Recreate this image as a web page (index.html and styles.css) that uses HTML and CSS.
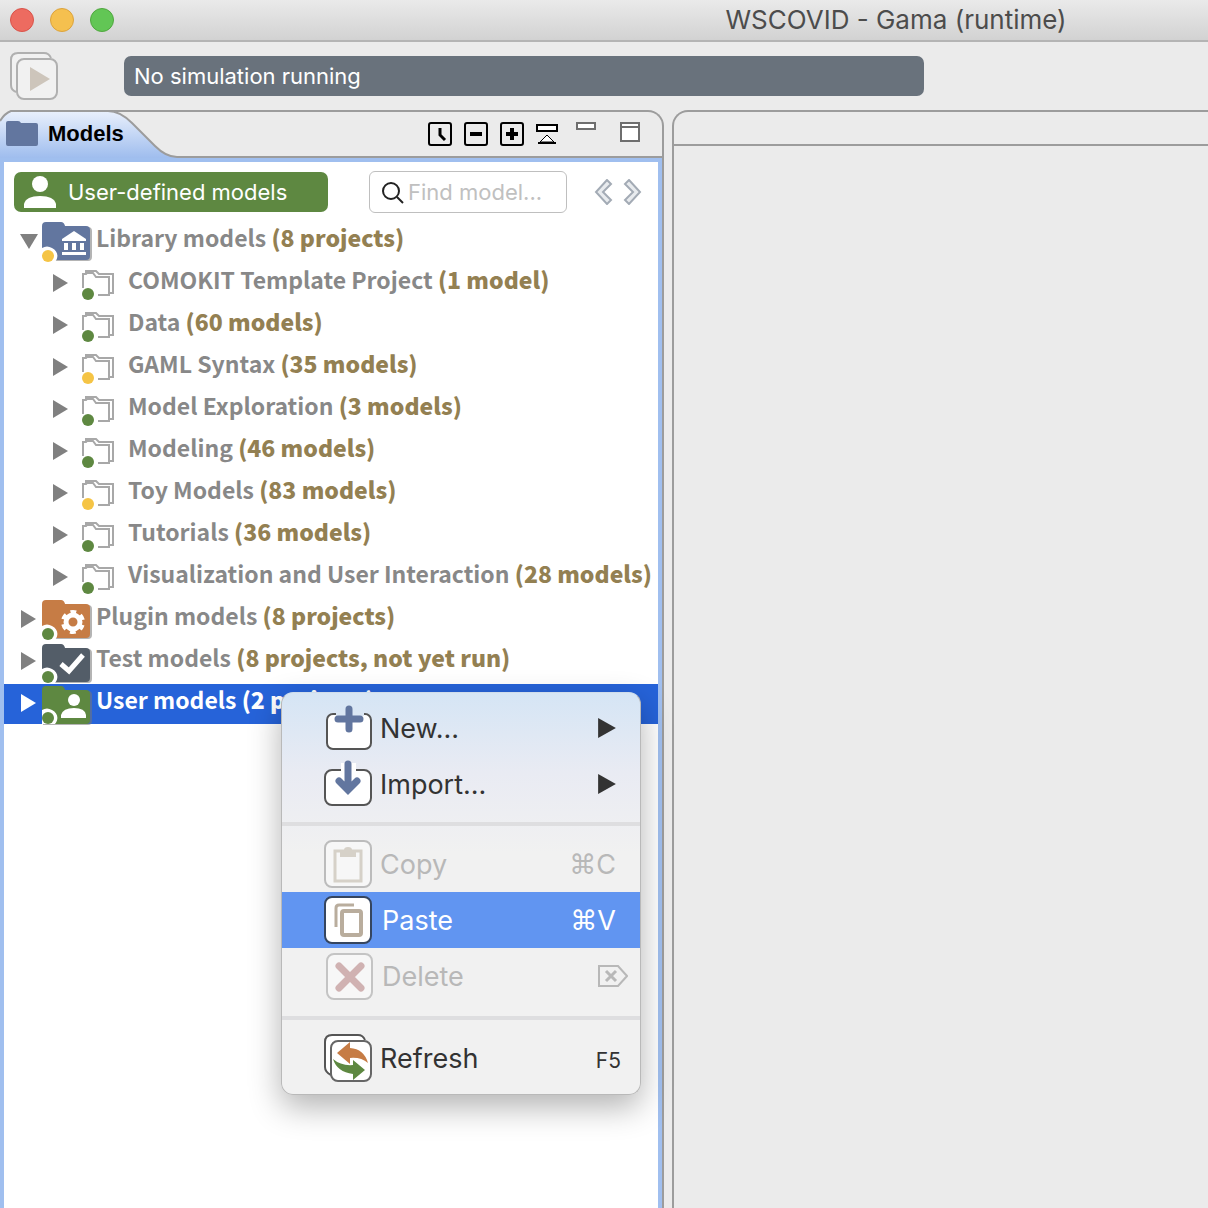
FILE: index.html
```html
<!DOCTYPE html>
<html lang="en">
<head>
<meta charset="utf-8">
<title>WSCOVID - Gama (runtime)</title>
<link rel="stylesheet" href="styles.css">
</head>
<body>
<svg class="sprite" aria-hidden="true">
  <symbol id="right" viewBox="0 0 16 18"><path d="M1 0v18l15-9z" fill="currentColor"/></symbol>
  <symbol id="down" viewBox="0 0 18 16"><path d="M0 1h18L9 16z" fill="currentColor"/></symbol>
  <symbol id="folders" viewBox="0 0 34 32">
    <path d="M1 18V4h3l1-1h6l3 4h13v18H16M4 4V1h10l3 3h14v19h-3" fill="none" stroke="#a8a8a8" stroke-width="2"/>
    <circle cx="6" cy="24" r="6" fill="currentColor"/>
  </symbol>
  <symbol id="folder" viewBox="0 0 50 40">
    <path d="M1 4q0-3 3-3h15q3 0 4 4h23q4 0 4 4v26q0 4-4 4H1z" fill="#777" opacity=".55"/>
    <path d="M0 4q0-4 4-4h15q3 0 4 4h21q4 0 4 4v26q0 4-4 4H0z" fill="currentColor"/>
  </symbol>
  <symbol id="badge" viewBox="0 0 16 16">
    <path d="M0 2q5-3 10 0c6 3 7 9 3 14H0z" fill="#fff"/>
  </symbol>
</svg>

<div class="window">
  <header class="titlebar">
    <div class="lights"><button class="light red" aria-label="Close"></button><button class="light amber" aria-label="Minimize"></button><button class="light green" aria-label="Zoom"></button></div>
    <h1 class="title">WSCOVID - Gama (runtime)</h1>
  </header>

  <div class="runbar">
    <button class="run" aria-label="Run">
      <svg width="50" height="50" viewBox="0 0 50 50"><g fill="#f1f1f1" stroke="#b0b0b0" stroke-width="2"><path d="M7 41Q2 39 2 34V9q0-7 7-7h26q5 0 7 5"/><rect x="8" y="8" width="40" height="40" rx="7"/></g><path d="M21 16v24l20-12z" fill="#cdc5bb"/></svg>
    </button>
    <div class="status">No simulation running</div>
  </div>

  <main class="panes">
    <section class="pane models">
      <div class="pane-head">
        <div class="tab">
          <svg class="tab-shape" width="180" height="48" viewBox="0 0 180 48">
            <defs><linearGradient id="tabfill" x1="0" y1="0" x2="0" y2="1"><stop offset="0" stop-color="#e9f0fc"/><stop offset="1" stop-color="#9fbdee"/></linearGradient></defs>
            <path d="M0 0h180v48H0z" fill="#ebebeb"/>
            <path d="M108 1h72" stroke="#9c9c9c" stroke-width="2"/>
            <path d="M0 11C3 6 6 3 11 1h97c10 0 18 6 24 12l23 23c6 6 13 11 22 11h3v1H0z" fill="url(#tabfill)"/>
            <path d="M0 11C3 6 6 3 11 1h97c10 0 18 6 24 12l23 23c6 6 13 11 22 11h3" fill="none" stroke="#9c9c9c" stroke-width="2"/>
          </svg>
          <div class="tab-label">
            <svg width="34" height="28" viewBox="0 0 34 28"><path d="M1 3q0-2 2-2h10q2 0 3 2h15q2 0 2 2v19q0 2-2 2H3q-2 0-2-2z" fill="#62769f"/></svg>
            <span>Models</span>
          </div>
        </div>
        <div class="tools">
          <button aria-label="History"><svg width="24" height="24" viewBox="0 0 24 24"><rect x="1" y="1" width="22" height="22" rx="2" fill="none" stroke="#000" stroke-width="2"/><path d="M12 6v7l5 5" fill="none" stroke="#000" stroke-width="3"/></svg></button>
          <button aria-label="Collapse all"><svg width="24" height="24" viewBox="0 0 24 24"><rect x="1" y="1" width="22" height="22" rx="2" fill="none" stroke="#000" stroke-width="2"/><path d="M6 12h12" stroke="#000" stroke-width="4"/></svg></button>
          <button aria-label="Expand all"><svg width="24" height="24" viewBox="0 0 24 24"><rect x="1" y="1" width="22" height="22" rx="2" fill="none" stroke="#000" stroke-width="2"/><path d="M6 12h12M12 6v12" stroke="#000" stroke-width="4"/></svg></button>
          <button aria-label="Link with editor"><svg width="24" height="24" viewBox="0 0 24 24"><path d="M1 3h20v6H1z" fill="#fff" stroke="#000" stroke-width="2"/><path d="M11 13l-7 7h14z" fill="#fff" stroke="#000"/><path d="M2 21h18" stroke="#000" stroke-width="2"/></svg></button>
          <button class="min" aria-label="Minimize view"><svg width="20" height="24" viewBox="0 0 20 24"><path d="M1 1h18v6H1z" fill="#fff" stroke="#6e6e6e" stroke-width="2"/></svg></button>
          <button class="max" aria-label="Maximize view"><svg width="20" height="24" viewBox="0 0 20 24"><path d="M1 1h18v18H1zM1 5h18" fill="#fff" stroke="#6e6e6e" stroke-width="2"/></svg></button>
        </div>
      </div>

      <div class="pane-body">
        <div class="filter">
          <button class="user-models">
            <svg width="36" height="36" viewBox="0 0 36 36" fill="#fff"><circle cx="18" cy="10" r="8"/><path d="M2 34v-4q2-8 16-8t16 8v4z"/></svg>
            User-defined models
          </button>
          <label class="search">
            <svg width="24" height="24" viewBox="0 0 24 24" fill="none" stroke="#222" stroke-width="2"><circle cx="9" cy="11" r="8"/><path d="M15 17l6 6"/></svg>
            <input type="text" placeholder="Find model..." aria-label="Find model">
          </label>
          <div class="nav">
            <button aria-label="Previous"><svg width="20" height="26" viewBox="0 0 20 26"><path d="M13 1L2 13l11 12 4-4-8-8 8-8z" fill="#e8ebee" stroke="#a3abb5" stroke-width="2"/></svg></button>
            <button aria-label="Next"><svg width="20" height="26" viewBox="0 0 20 26"><path d="M7 1l11 12L7 25l-4-4 8-8-8-8z" fill="#e8ebee" stroke="#a3abb5" stroke-width="2"/></svg></button>
          </div>
        </div>

        <ul class="tree">
          <li class="row root">
            <button class="twist" aria-label="Collapse"><svg width="18" height="16"><use href="#down"/></svg></button>
            <svg class="pic" width="50" height="40" viewBox="0 0 50 40"><g color="#62769f"><use href="#folder" width="50" height="40"/></g><path d="M20 17l12-8 12 8v2H20zM22 21h4v7h-4zm8 0h4v7h-4zm8 0h4v7h-4zM20 30h24v3H20z" fill="#fff"/><use href="#badge" y="24" width="16" height="16"/><circle cx="6" cy="34" r="6" fill="#f5c445"/></svg>
            <span class="name">Library models <b>(8 projects)</b></span>
          </li>
          <li class="row child ok"><button class="twist" aria-label="Expand"><svg width="16" height="18"><use href="#right"/></svg></button><svg class="pic" width="34" height="32"><use href="#folders"/></svg><span class="name">COMOKIT Template Project <b>(1 model)</b></span></li>
          <li class="row child ok"><button class="twist" aria-label="Expand"><svg width="16" height="18"><use href="#right"/></svg></button><svg class="pic" width="34" height="32"><use href="#folders"/></svg><span class="name">Data <b>(60 models)</b></span></li>
          <li class="row child warn"><button class="twist" aria-label="Expand"><svg width="16" height="18"><use href="#right"/></svg></button><svg class="pic" width="34" height="32"><use href="#folders"/></svg><span class="name">GAML Syntax <b>(35 models)</b></span></li>
          <li class="row child ok"><button class="twist" aria-label="Expand"><svg width="16" height="18"><use href="#right"/></svg></button><svg class="pic" width="34" height="32"><use href="#folders"/></svg><span class="name">Model Exploration <b>(3 models)</b></span></li>
          <li class="row child ok"><button class="twist" aria-label="Expand"><svg width="16" height="18"><use href="#right"/></svg></button><svg class="pic" width="34" height="32"><use href="#folders"/></svg><span class="name">Modeling <b>(46 models)</b></span></li>
          <li class="row child warn"><button class="twist" aria-label="Expand"><svg width="16" height="18"><use href="#right"/></svg></button><svg class="pic" width="34" height="32"><use href="#folders"/></svg><span class="name">Toy Models <b>(83 models)</b></span></li>
          <li class="row child ok"><button class="twist" aria-label="Expand"><svg width="16" height="18"><use href="#right"/></svg></button><svg class="pic" width="34" height="32"><use href="#folders"/></svg><span class="name">Tutorials <b>(36 models)</b></span></li>
          <li class="row child ok"><button class="twist" aria-label="Expand"><svg width="16" height="18"><use href="#right"/></svg></button><svg class="pic" width="34" height="32"><use href="#folders"/></svg><span class="name">Visualization and User Interaction <b>(28 models)</b></span></li>
          <li class="row root">
            <button class="twist" aria-label="Expand"><svg width="16" height="18"><use href="#right"/></svg></button>
            <svg class="pic" width="50" height="40" viewBox="0 0 50 40"><g color="#c67c45"><use href="#folder" width="50" height="40"/></g><circle cx="31" cy="22" r="7" fill="none" stroke="#fff" stroke-width="5"/><circle cx="31" cy="22" r="10" fill="none" stroke="#fff" stroke-width="4" stroke-dasharray="5.5 4.97" stroke-dashoffset="2.7" transform="rotate(30 31 22)"/><use href="#badge" y="24" width="16" height="16"/><circle cx="6" cy="34" r="6" fill="#5e8841"/></svg>
            <span class="name">Plugin models <b>(8 projects)</b></span>
          </li>
          <li class="row root">
            <button class="twist" aria-label="Expand"><svg width="16" height="18"><use href="#right"/></svg></button>
            <svg class="pic" width="50" height="40" viewBox="0 0 50 40"><g color="#535d68"><use href="#folder" y="2" width="50" height="40"/></g><path d="M19 22l8 7 14-16" fill="none" stroke="#fff" stroke-width="5"/><use href="#badge" y="25" width="16" height="16"/><circle cx="6" cy="35" r="6" fill="#5e8841"/></svg>
            <span class="name">Test models <b>(8 projects, not yet run)</b></span>
          </li>
          <li class="row root selected">
            <button class="twist" aria-label="Expand"><svg width="16" height="18"><use href="#right"/></svg></button>
            <svg class="pic" width="50" height="40" viewBox="0 0 50 40"><g color="#5e8841"><use href="#folder" y="2" width="50" height="40"/></g><circle cx="32" cy="16" r="6" fill="#fff"/><path d="M19 34v-3q2-7 13-7t12 7v3z" fill="#fff"/><use href="#badge" y="24" width="16" height="16"/><circle cx="6" cy="34" r="6" fill="#5e8841"/></svg>
            <span class="name">User models <b>(2 projects)</b></span>

            <div class="menu" role="menu">
              <button role="menuitem">
                <svg width="48" height="48" viewBox="0 0 48 48"><rect x="3" y="10" width="44" height="35" rx="6" fill="#fff" stroke="#555" stroke-width="2"/><path d="M12 8h28v4H12z" fill="#dbe7f4"/><path d="M12 12h28v4H12z" fill="#fff"/><path d="M25 5v20M14 15h22" stroke="#62769f" stroke-width="7" stroke-linecap="round"/></svg>
                <span>New...</span><svg class="more" width="18" height="20" viewBox="0 0 16 18"><path d="M0 0v18l16-9z" fill="currentColor"/></svg>
              </button>
              <button role="menuitem">
                <svg width="48" height="48" viewBox="0 0 48 48"><rect x="1" y="10" width="46" height="35" rx="7" fill="#fff" stroke="#555" stroke-width="2"/><path d="M17 3h15v20H17z" fill="#fff"/><path d="M24 4v24M15 21l9 9 9-9" fill="none" stroke="#62769f" stroke-width="7" stroke-linecap="round"/></svg>
                <span>Import...</span><svg class="more" width="18" height="20" viewBox="0 0 16 18"><path d="M0 0v18l16-9z" fill="currentColor"/></svg>
              </button>
              <hr>
              <button role="menuitem" disabled>
                <svg width="48" height="48" viewBox="0 0 48 48"><rect x="1" y="1" width="46" height="46" rx="7" fill="#f7f7f7" stroke="#bcbcbc" stroke-width="2"/><path d="M11 11h26v30H11z" fill="none" stroke="#d6d1c8" stroke-width="3"/><path d="M16 10h4q0-3 4-3t4 3h4v7H16z" fill="#d6d1c8"/></svg>
                <span>Copy</span><kbd><i>⌘</i>C</kbd>
              </button>
              <button role="menuitem" class="active">
                <svg width="50" height="48" viewBox="0 0 50 48"><rect x="1" y="1" width="46" height="46" rx="7" fill="#fff" stroke="#35455f" stroke-width="2"/><path d="M12 31V12q0-3 3-3h15" fill="none" stroke="#b9ad9d" stroke-width="3"/><rect x="18" y="15" width="19" height="24" rx="2" fill="none" stroke="#b9ad9d" stroke-width="4"/></svg>
                <span>Paste</span><kbd><i>⌘</i>V</kbd>
              </button>
              <button role="menuitem" disabled>
                <svg width="50" height="48" viewBox="0 0 50 48"><rect x="3" y="2" width="45" height="45" rx="7" fill="#f7f7f7" stroke="#c4c4c4" stroke-width="2"/><path d="M15 14l22 22M37 14L15 36" stroke="#d0b2b2" stroke-width="7" stroke-linecap="round"/></svg>
                <span>Delete</span><svg class="del" width="30" height="22" viewBox="0 0 30 22" fill="none" stroke="currentColor" stroke-width="2"><path d="M1 1h19l9 10-9 10H1z"/><path d="M8 6l10 10M18 6L8 16" stroke-width="3"/></svg>
              </button>
              <hr class="wide">
              <button role="menuitem">
                <svg width="48" height="48" viewBox="0 0 48 48"><path d="M7 41Q1 38 1 33V8q0-7 7-7h26q5 0 7 5" fill="#fff" stroke="#555" stroke-width="2"/><rect x="7" y="7" width="40" height="40" rx="7" fill="#fff" stroke="#666" stroke-width="2"/><path d="M13 19L26 8v6q14 1 18 15-7-6-18-5v6z" fill="#c67c45"/><path d="M41 36L29 46v-6Q13 38 9 25q8 7 20 6v-5z" fill="#5e8841"/></svg>
                <span>Refresh</span><kbd class="fkey">F5</kbd>
              </button>
            </div>
          </li>
        </ul>
      </div>
    </section>

    <section class="pane editor"><div class="editor-head"></div></section>
  </main>
</div>
</body>
</html>
```
FILE: styles.css
```css
* { box-sizing: border-box; }
body { margin: 0; background: #ebebeb; font-family: Inter, "Liberation Sans", sans-serif; }
button { margin: 0; padding: 0; border: 0; background: none; color: inherit; font: inherit; text-align: left; }
svg { display: block; flex: none; }
.sprite { position: absolute; width: 0; height: 0; }

.window { display: flex; flex-direction: column; min-height: 100vh; overflow: hidden; }

.titlebar { display: flex; align-items: center; height: 42px; padding-left: 10px; background: linear-gradient(#eaeaea, #d2d2d2); border-bottom: 2px solid #b4b4b4; }
.lights { display: flex; gap: 16px; }
.light { width: 24px; height: 24px; border-radius: 50%; border: 1px solid; }
.red { background: #ed6b60; border-color: #d9534a; }
.amber { background: #f5c04f; border-color: #dca33c; }
.green { background: #62c655; border-color: #50a73f; }
.title { flex: 1; margin: 0; padding-left: 470px; text-align: center; white-space: nowrap; font-size: 26px; font-weight: 400; line-height: 42px; color: #4c4c4c; }

.runbar { display: flex; align-items: center; height: 68px; padding-left: 9px; gap: 65px; }
.status { width: 800px; height: 40px; padding-left: 10px; border-radius: 7px; background: #69727c; color: #fff; font-size: 22px; line-height: 40px; }

.panes { flex: 1; display: grid; grid-template-columns: 83fr 67fr; gap: 8px; }
.pane { display: flex; flex-direction: column; min-width: 0; border: 2px solid #9c9c9c; border-bottom: 0; }
.models { border-left: 0; border-radius: 0 16px 0 0; }
.editor { border-right: 0; border-radius: 16px 0 0 0; }
.editor-head { height: 34px; border-bottom: 2px solid #9c9c9c; }

.pane-head { display: flex; height: 46px; }
.tab { display: grid; margin-top: -2px; }
.tab-shape, .tab-label { grid-area: 1 / 1; }
.tab-label { display: flex; align-items: center; gap: 9px; padding-left: 5px; font: bold 22px "Liberation Sans", sans-serif; }
.tools { flex: 1; display: flex; align-items: center; justify-content: flex-end; gap: 12px; padding-right: 22px; border-bottom: 2px solid #9c9c9c; }
.min { margin-left: 4px; }
.max { margin-left: 12px; }

.pane-body { flex: 1; border: 4px solid #a0bfef; border-bottom: 0; background: #fff; }
.filter { display: flex; align-items: center; height: 60px; padding: 0 16px 0 10px; }
.user-models { display: flex; align-items: center; gap: 10px; width: 314px; height: 40px; padding-left: 8px; border-radius: 7px; background: #5e8841; color: #fff; font-size: 22px; }
.search { display: flex; align-items: center; gap: 2px; width: 198px; height: 42px; margin-left: 41px; padding-left: 12px; border: 1px solid #bfbfbf; border-radius: 6px; }
.search input { width: 150px; padding: 0; border: 0; outline: 0; background: none; font: 22px Inter, sans-serif; }
.search input::placeholder { color: #c0c0c0; opacity: 1; }
.nav { display: flex; gap: 8px; margin-left: auto; }

.tree { display: flex; flex-direction: column; gap: 2px; margin: 0; padding: 0; list-style: none; font: bold 23px "Noto Sans CJK SC", "Open Sans", sans-serif; color: #888; }
.row { position: relative; display: flex; align-items: center; height: 40px; white-space: nowrap; }
.root { padding-left: 16px; }
.child { padding-left: 48px; }
.twist { flex: none; width: 22px; padding-bottom: 2px; color: #808080; }
.pic { overflow: visible; }
.child .pic { margin: 4px 12px 0 8px; }
.root .pic { margin-right: 4px; }
.name { align-self: flex-start; line-height: 30px; }
.name b { font-weight: 900; color: #938052; }
.ok .pic { color: #5e8841; }
.warn .pic { color: #f5c445; }
.selected, .selected .name b, .selected .twist { color: #fff; }
.selected { background: #2663d9; }

.menu { position: absolute; top: 8px; left: 277px; width: 360px; padding: 7px 0 8px; border: 1px solid #b9b9b9; border-top-color: #cfdcea; border-radius: 12px; background: linear-gradient(#d5e5f5, #e9ebf3 80px, #f1f1f1 160px); box-shadow: 0 12px 32px rgba(0, 0, 0, .3); font: 27px Inter, sans-serif; color: #333; }
.menu button { display: flex; align-items: center; gap: 8px; width: 100%; height: 56px; padding: 0 24px 0 42px; }
.menu button span { flex: 1; }
.menu button:disabled { color: #b8b8b8; }
.menu .active { background: #6195f1; color: #fff; }
.menu hr { height: 4px; margin: 10px 0; border: 0; background: #dedee0; }
.menu .wide { margin-top: 12px; }
.menu kbd { display: flex; align-items: center; font: inherit; }
.menu kbd i { font: 27px "DejaVu Sans", sans-serif; }
.menu .fkey { margin-right: -5px; padding-top: 4px; font-size: 21px; }
.menu .del { margin-right: -12px; }
```
